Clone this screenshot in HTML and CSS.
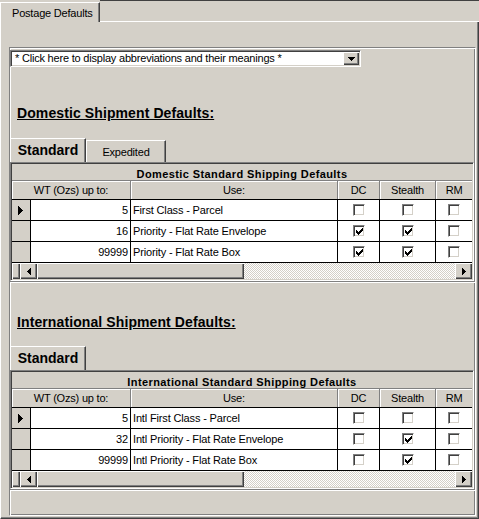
FILE: index.html
```html
<!DOCTYPE html>
<html>
<head>
<meta charset="utf-8">
<title>Postage Defaults</title>
<link rel="stylesheet" href="styles.css">
</head>
<body>
<div class="tabstrip">
  <div class="tab">Postage Defaults</div>
  <div class="tabfill"></div>
</div>
<div class="tabpanel">
  <div class="frame">
    <section class="sec sec-dom">
      <div class="combo">
        <span class="combo-text">* Click here to display abbreviations and their meanings *</span>
        <span class="raised combo-btn"><svg width="7" height="4" viewBox="0 0 7 4"><path d="M0,0h7v1h-1v1h-1v1h-1v1h-1v-1h-1v-1h-1v-1h-1z"/></svg></span>
      </div>
      <h2 class="heading">Domestic Shipment Defaults:</h2>
      <div class="subtabs">
        <div class="subtab active">Standard</div>
        <div class="subtab other">Expedited</div>
      </div>
      <div class="dgrid">
        <div class="dg-title">Domestic Standard Shipping Defaults</div>
        <div class="dg-head">
          <div class="hc">WT (Ozs) up to:</div>
          <div class="hc">Use:</div>
          <div class="hc">DC</div>
          <div class="hc">Stealth</div>
          <div class="hc hc-last">RM</div>
        </div>
        <div class="dg-row">
          <div class="sel"><svg width="5" height="9" viewBox="0 0 5 9"><path d="M0,0h1v1h1v1h1v1h1v1h1v1h-1v1h-1v1h-1v1h-1v1h-1z"/></svg></div>
          <div class="c num">5</div>
          <div class="c txt">First Class - Parcel</div>
          <div class="c chk"><span class="cb"></span></div>
          <div class="c chk"><span class="cb"></span></div>
          <div class="c chk last"><span class="cb"></span></div>
        </div>
        <div class="dg-row">
          <div class="sel"></div>
          <div class="c num">16</div>
          <div class="c txt">Priority - Flat Rate Envelope</div>
          <div class="c chk"><span class="cb"><svg class="ck" width="7" height="7" viewBox="0 0 7 7"><path d="M6,0h1v3h-1zM5,1h1v3h-1zM4,2h1v3h-1zM3,3h1v3h-1zM2,4h1v3h-1zM1,3h1v3h-1zM0,2h1v3h-1z"/></svg></span></div>
          <div class="c chk"><span class="cb"><svg class="ck" width="7" height="7" viewBox="0 0 7 7"><path d="M6,0h1v3h-1zM5,1h1v3h-1zM4,2h1v3h-1zM3,3h1v3h-1zM2,4h1v3h-1zM1,3h1v3h-1zM0,2h1v3h-1z"/></svg></span></div>
          <div class="c chk last"><span class="cb"></span></div>
        </div>
        <div class="dg-row">
          <div class="sel"></div>
          <div class="c num">99999</div>
          <div class="c txt">Priority - Flat Rate Box</div>
          <div class="c chk"><span class="cb"><svg class="ck" width="7" height="7" viewBox="0 0 7 7"><path d="M6,0h1v3h-1zM5,1h1v3h-1zM4,2h1v3h-1zM3,3h1v3h-1zM2,4h1v3h-1zM1,3h1v3h-1zM0,2h1v3h-1z"/></svg></span></div>
          <div class="c chk"><span class="cb"><svg class="ck" width="7" height="7" viewBox="0 0 7 7"><path d="M6,0h1v3h-1zM5,1h1v3h-1zM4,2h1v3h-1zM3,3h1v3h-1zM2,4h1v3h-1zM1,3h1v3h-1zM0,2h1v3h-1z"/></svg></span></div>
          <div class="c chk last"><span class="cb"></span></div>
        </div>
        <div class="hscroll">
          <span class="raised sb-box"></span>
          <span class="raised sb-btn"><svg width="4" height="7" viewBox="0 0 4 7"><path d="M3,0h1v7h-1v-1h-1v-1h-1v-1h-1v-1h1v-1h1v-1h1z"/></svg></span>
          <span class="raised sb-thumb"></span>
          <span class="sb-track"></span>
          <span class="raised sb-btn"><svg width="4" height="7" viewBox="0 0 4 7"><path d="M0,0h1v1h1v1h1v1h1v1h-1v1h-1v1h-1v1h-1z"/></svg></span>
        </div>
      </div>
    </section>

    <section class="sec sec-intl">
      <h2 class="heading heading-intl">International Shipment Defaults:</h2>
      <div class="subtabs">
        <div class="subtab active">Standard</div>
      </div>
      <div class="dgrid">
        <div class="dg-title">International Standard Shipping Defaults</div>
        <div class="dg-head">
          <div class="hc">WT (Ozs) up to:</div>
          <div class="hc">Use:</div>
          <div class="hc">DC</div>
          <div class="hc">Stealth</div>
          <div class="hc hc-last">RM</div>
        </div>
        <div class="dg-row">
          <div class="sel"><svg width="5" height="9" viewBox="0 0 5 9"><path d="M0,0h1v1h1v1h1v1h1v1h1v1h-1v1h-1v1h-1v1h-1v1h-1z"/></svg></div>
          <div class="c num">5</div>
          <div class="c txt">Intl First Class - Parcel</div>
          <div class="c chk"><span class="cb"></span></div>
          <div class="c chk"><span class="cb"></span></div>
          <div class="c chk last"><span class="cb"></span></div>
        </div>
        <div class="dg-row">
          <div class="sel"></div>
          <div class="c num">32</div>
          <div class="c txt">Intl Priority - Flat Rate Envelope</div>
          <div class="c chk"><span class="cb"></span></div>
          <div class="c chk"><span class="cb"><svg class="ck" width="7" height="7" viewBox="0 0 7 7"><path d="M6,0h1v3h-1zM5,1h1v3h-1zM4,2h1v3h-1zM3,3h1v3h-1zM2,4h1v3h-1zM1,3h1v3h-1zM0,2h1v3h-1z"/></svg></span></div>
          <div class="c chk last"><span class="cb"></span></div>
        </div>
        <div class="dg-row">
          <div class="sel"></div>
          <div class="c num">99999</div>
          <div class="c txt">Intl Priority - Flat Rate Box</div>
          <div class="c chk"><span class="cb"></span></div>
          <div class="c chk"><span class="cb"><svg class="ck" width="7" height="7" viewBox="0 0 7 7"><path d="M6,0h1v3h-1zM5,1h1v3h-1zM4,2h1v3h-1zM3,3h1v3h-1zM2,4h1v3h-1zM1,3h1v3h-1zM0,2h1v3h-1z"/></svg></span></div>
          <div class="c chk last"><span class="cb"></span></div>
        </div>
        <div class="hscroll">
          <span class="raised sb-box"></span>
          <span class="raised sb-btn"><svg width="4" height="7" viewBox="0 0 4 7"><path d="M3,0h1v7h-1v-1h-1v-1h-1v-1h-1v-1h1v-1h1v-1h1z"/></svg></span>
          <span class="raised sb-thumb"></span>
          <span class="sb-track"></span>
          <span class="raised sb-btn"><svg width="4" height="7" viewBox="0 0 4 7"><path d="M0,0h1v1h1v1h1v1h1v1h-1v1h-1v1h-1v1h-1z"/></svg></span>
        </div>
      </div>
    </section>

    <div class="sec sec-foot"></div>
  </div>
</div>
</body>
</html>
```

FILE: styles.css
```css
* { box-sizing: border-box; }
html, body { margin: 0; padding: 0; }
body {
  width: 479px;
  height: 519px;
  overflow: hidden;
  background: #d4d0c8;
  font-family: "Liberation Sans", Arial, sans-serif;
  font-size: 11px;
  color: #000;
}
svg { display: block; fill: #000; shape-rendering: crispEdges; }

/* top tab strip */
.tabstrip { display: flex; height: 22px; }
.tab {
  width: 100px;
  height: 20px;
  margin-top: 2px;
  border-top: 1px solid #fff;
  border-left: 1px solid #fff;
  border-right: 1px solid #404040;
  box-shadow: inset -1px 0 #808080;
  padding: 4px 0 0 11px;
  line-height: 13px;
  letter-spacing: -0.2px;
  white-space: nowrap;
}
.tabfill {
  flex: 1;
  border-top: 1px solid #404040;
  border-bottom: 1px solid #fff;
}

.tabpanel {
  height: 497px;
  display: flex;
  flex-direction: column;
  border-left: 1px solid #fff;
  border-right: 1px solid #404040;
  border-bottom: 1px solid #404040;
  box-shadow: inset -1px -1px #808080;
  padding: 25px 2px 2px 8px;
}
.frame {
  flex: 1;
  display: flex;
  flex-direction: column;
  border: 1px solid;
  border-color: #808080 #fff #fff #808080;
  box-shadow: inset 1px 1px #fff, inset -1px -1px #808080;
}
.sec { flex-shrink: 0; }
.sec-dom { padding-top: 1px; border-bottom: 1px solid #808080; }
.sec-intl { border-top: 1px solid #fff; border-bottom: 1px solid #808080; }
.sec-foot { flex: 1; border-top: 1px solid #fff; }

/* raised 3D element */
.raised {
  background: #d4d0c8;
  box-shadow: inset 1px 1px #fff, inset -1px -1px #404040, inset -2px -2px #808080;
}

/* combo box */
.combo {
  width: 351px;
  height: 17px;
  margin-top: 1px;
  display: flex;
  background: #fff;
  border: 1px solid;
  border-color: #808080 #fff #fff #808080;
  box-shadow: inset 1px 1px #404040, inset -1px -1px #d4d0c8;
  padding: 1px;
}
.combo-text {
  flex: 1;
  padding-left: 3px;
  line-height: 13px;
  letter-spacing: -0.2px;
  white-space: nowrap;
  overflow: hidden;
}
.combo-btn {
  width: 16px;
  height: 13px;
  display: flex;
  align-items: center;
  justify-content: center;
}

/* headings */
.heading {
  margin: 39px 0 0 7px;
  font-size: 14px;
  font-weight: bold;
  line-height: 15px;
  letter-spacing: 0.1px;
  text-decoration: underline;
  white-space: nowrap;
}
.heading-intl { margin-top: 32px; }

/* sub tabs */
.subtabs {
  display: flex;
  align-items: flex-end;
  height: 24px;
  margin-top: 17px;
}
.heading-intl + .subtabs { margin-top: 16px; }
.subtab {
  border-top: 1px solid #fff;
  border-left: 1px solid #fff;
  border-right: 1px solid #404040;
  box-shadow: inset -1px 0 #808080;
  text-align: center;
  white-space: nowrap;
}
.subtab.active {
  width: 76px;
  height: 24px;
  padding-top: 3px;
  font-size: 14px;
  font-weight: bold;
  line-height: 16px;
}
.subtab.other {
  width: 80px;
  height: 22px;
  padding-top: 5px;
  line-height: 13px;
  letter-spacing: -0.2px;
}

/* data grid */
.dgrid {
  width: 464px;
  border: 1px solid;
  border-color: #808080 #fff #fff #808080;
  box-shadow: inset 1px 1px #404040, inset -1px -1px #d4d0c8;
  padding: 1px;
  overflow: hidden;
}
.dg-title {
  height: 17px;
  border-bottom: 1px solid #808080;
  padding-top: 4px;
  line-height: 12px;
  font-weight: bold;
  letter-spacing: 0.4px;
  text-align: center;
  white-space: nowrap;
}
.dg-head {
  display: grid;
  grid-template-columns: 119px 207px 42px 56px 36px;
  height: 19px;
  border-bottom: 1px solid #000;
}
.hc {
  border-right: 1px solid #808080;
  box-shadow: inset 1px 1px #fff;
  line-height: 18px;
  letter-spacing: -0.2px;
  text-align: center;
  white-space: nowrap;
  overflow: hidden;
}
.hc-last { border-right: 0; }
.dg-row {
  display: grid;
  grid-template-columns: 19px 100px 207px 42px 56px 36px;
  height: 21px;
  border-bottom: 1px solid #000;
}
.sel {
  background: #d4d0c8;
  border-right: 1px solid #000;
  display: flex;
  align-items: center;
  padding-left: 6px;
}
.c {
  background: #fff;
  border-right: 1px solid #000;
  line-height: 20px;
  letter-spacing: -0.15px;
  white-space: nowrap;
  overflow: hidden;
}
.c.last { border-right: 0; }
.num { text-align: right; padding-right: 2px; }
.txt { padding-left: 2px; }
.chk { display: flex; align-items: center; justify-content: center; }
.cb {
  width: 12px;
  height: 12px;
  background: #fff;
  border: 1px solid;
  border-color: #808080 #fff #fff #808080;
  box-shadow: inset 1px 1px #404040, inset -1px -1px #d4d0c8;
  padding: 2px 0 0 2px;
}

/* horizontal scrollbar */
.hscroll { display: flex; height: 16px; }
.sb-box { width: 8px; }
.sb-btn {
  width: 17px;
  display: flex;
  align-items: center;
  justify-content: center;
}
.sb-thumb { width: 207px; }
.sb-track {
  flex: 1;
  background: repeating-conic-gradient(#d4d0c8 0 25%, #fff 0 50%) 0 0 / 2px 2px;
}
```
